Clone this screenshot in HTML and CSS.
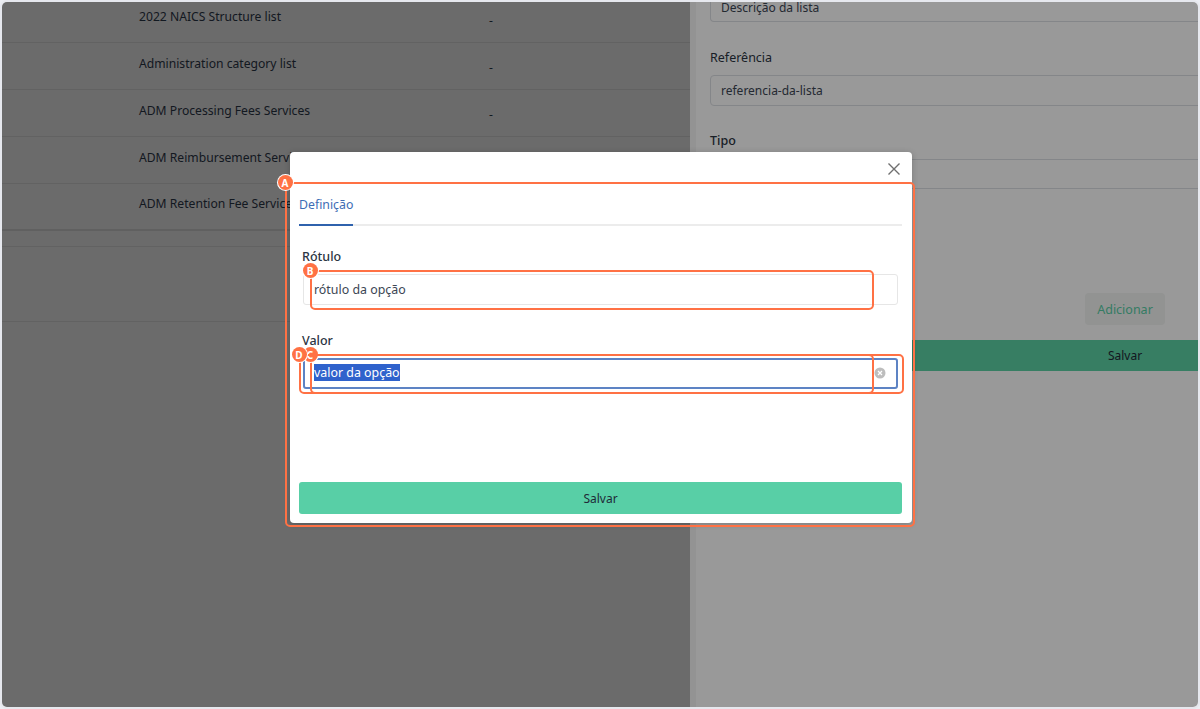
FILE: index.html
```html
<!DOCTYPE html>
<html lang="pt">
<head>
    <meta charset="UTF-8">
    <title>Definição da opção</title>
    <meta name="viewport" content="width=device-width, initial-scale=1">
    <link rel="stylesheet" href="styles.css">
</head>
<body>
<div class="screen">
    <div class="list-side">
        <div class="row first"><span class="row-name">2022 NAICS Structure list</span><span class="row-dash">-</span></div>
        <div class="row"><span class="row-name">Administration category list</span><span class="row-dash">-</span></div>
        <div class="row"><span class="row-name">ADM Processing Fees Services</span><span class="row-dash">-</span></div>
        <div class="row"><span class="row-name">ADM Reimbursement Services</span><span class="row-dash">-</span></div>
        <div class="row last"><span class="row-name">ADM Retention Fee Services</span><span class="row-dash">-</span></div>
        <div class="row-gap"></div>
        <div class="row-foot"></div>
    </div>

    <div class="drawer">
        <div class="field-box cut">Descrição da lista</div>
        <div class="field-label">Referência</div>
        <div class="field-box">referencia-da-lista</div>
        <div class="field-label tipo">Tipo</div>
        <div class="field-box tipo-box"></div>
        <div class="add-row"><button class="add-btn">Adicionar</button></div>
        <button class="drawer-save"><span>Salvar</span></button>
    </div>

    <div class="mask"></div>

    <div class="modal">
        <div class="modal-head">
            <svg class="close-icon" viewBox="0 0 14 14" width="14" height="14">
                <path d="M1.5 1.5 L12.5 12.5 M12.5 1.5 L1.5 12.5" stroke="#6f6f6f" stroke-width="1.4" fill="none"/>
            </svg>
        </div>
        <div class="tabs"><span class="tab active">Definição</span></div>
        <div class="modal-form">
            <div class="modal-label">Rótulo</div>
            <div class="modal-input">rótulo da opção</div>
            <div class="modal-label valor">Valor</div>
            <div class="modal-input focused">
                <span class="selected">valor da opção</span>
                <svg class="clear-icon" viewBox="0 0 12 12" width="12" height="12">
                    <circle cx="6" cy="6" r="5.5" fill="#bdbdbd"/>
                    <path d="M4 4 L8 8 M8 4 L4 8" stroke="#fff" stroke-width="1.2"/>
                </svg>
            </div>
        </div>
        <button class="modal-save">Salvar</button>
    </div>

    <div class="note note-a"><span class="badge">A</span></div>
    <div class="note note-b"><span class="badge">B</span></div>
    <div class="note note-c"><span class="badge">C</span></div>
    <div class="note note-d"><span class="badge">D</span></div>
</div>
</body>
</html>
```

FILE: styles.css
```css
* { box-sizing: border-box; }
html, body { margin: 0; padding: 0; background: #eceef3; }
body { font-family: "Noto Sans", "Open Sans", Arial, sans-serif; color: #1f2a37; }
button { font-family: inherit; border: none; }

.screen { position: relative; display: flex; width: 1200px; height: 709px; overflow: hidden; border: 2px solid #e6e8ee; border-radius: 7px; background: #fff; }

/* list behind the drawer */
.list-side { width: 688px; flex-shrink: 0; background: #b2b2b2; }
.row { display: flex; align-items: center; height: 47px; padding: 0 0 6px 137px; border-bottom: 1px solid #a4a4a4; font-size: 12.15px; }
.row.first { height: 41px; padding-bottom: 12px; }
.row.last { border-bottom: 2px solid #a0a0a0; }
.row-name { width: 350px; }
.row-dash { position: relative; top: 4px; }
.row-gap { height: 16px; border-bottom: 1px solid #a4a4a4; }
.row-foot { height: 75px; border-bottom: 1px solid #a4a4a4; }

/* drawer */
.drawer { flex: 1; min-width: 0; overflow: hidden; padding-left: 14px; background: #fff; border-left: 6px solid #f6f6f6; }
.field-box { display: flex; align-items: center; width: 520px; height: 31px; padding: 0 10px; border: 1px solid #dcdfe4; border-radius: 4px; font-size: 12px; color: #3c4654; }
.field-box.cut { height: 20px; padding-bottom: 8px; border-top: none; border-radius: 0 0 4px 4px; }
.field-label { margin: 26px 0 7px; height: 20px; line-height: 19px; font-size: 12.5px; color: #2b3442; }
.field-label.tipo { margin: 25px 0 8px; font-weight: 500; }
.tipo-box { height: 30px; border-radius: 0; border-left: none; }
.add-row { display: flex; justify-content: flex-end; padding-right: 33px; margin-top: 104px; }
.add-btn { width: 80px; height: 32px; border-radius: 4px; background: #f3f5f4; color: #58cfa6; font-size: 12.5px; }
.drawer-save { display: block; width: 520px; height: 31px; margin: 15px 0 0 -20px; padding: 0 0 0 395px; background: #5dd2a5; color: #1f2a37; font-size: 12px; }
.drawer-save span { display: block; width: 80px; text-align: center; }

.mask { position: absolute; inset: 0; background: rgba(0, 0, 0, 0.4); }

/* modal */
.modal { position: absolute; left: 288px; top: 150px; display: flex; flex-direction: column; width: 622px; height: 371px; padding: 0 10px 9px 9px; background: #fff; border-radius: 4px; box-shadow: 0 1px 6px rgba(0, 0, 0, 0.2); }
.modal-head { display: flex; justify-content: flex-end; height: 36px; padding: 10px 0 0; }
.close-icon { margin-right: 1px; }
.tabs { display: flex; height: 38px; border-bottom: 2px solid #ececec; }
.tab { height: 38px; padding-top: 8px; font-size: 12.3px; }
.tab.active { color: #3e6db5; border-bottom: 2px solid #2f62ad; }
.modal-form { flex: 1; padding: 21px 4px 0 4px; }
.modal-label { height: 20px; line-height: 20px; margin: 0 0 7px -1px; font-size: 12.5px; font-weight: 500; color: #2b3442; }
.modal-label.valor { margin-top: 26px; }
.modal-input { display: flex; align-items: center; justify-content: space-between; height: 31px; padding: 0 10px 1px; border: 1px solid #e6e6e6; border-radius: 3px; font-size: 12.4px; color: #3c4654; }
.modal-input.focused { border: 2px solid #5d83c4; padding: 0 9px 2px; }
.selected { background: #2f62cc; color: #fff; line-height: 17px; }
.clear-icon { margin-right: 1px; }
.modal-save { width: 603px; height: 32px; border-radius: 3px; background: #58cfa6; color: #1f2a37; font-size: 12px; }

/* orange callouts */
.note { position: absolute; border: 2px solid #ff7144; border-radius: 5px; }
.badge { position: absolute; left: -9.5px; top: -9px; display: flex; align-items: center; justify-content: center; width: 15px; height: 15px; border-radius: 50%; background: #ff7144; color: #fff; font-size: 10px; font-weight: 700; box-shadow: 0 0 0 1px #fff; }
.note-a { left: 283px; top: 180px; width: 630px; height: 345px; }
.note-b { left: 308px; top: 268px; width: 564px; height: 40px; }
.note-c { left: 308px; top: 352px; width: 564px; height: 40px; }
.note-d { left: 297px; top: 352px; width: 605px; height: 40px; }
```
